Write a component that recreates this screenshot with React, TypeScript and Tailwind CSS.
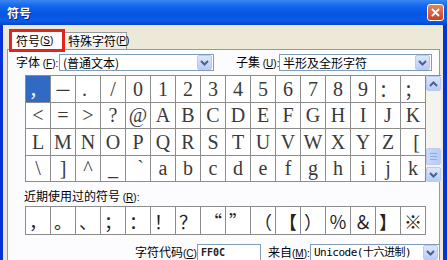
import React from "react";

type Cell = { c: string; cjk?: boolean; cls?: string };

const rows: Cell[][] = [
  [
    { c: "，", cjk: true },
    { c: "－", cjk: true },
    { c: ".", cls: "justify-start pl-[6px]" },
    { c: "/" },
    { c: "0" },
    { c: "1" },
    { c: "2" },
    { c: "3" },
    { c: "4" },
    { c: "5" },
    { c: "6" },
    { c: "7" },
    { c: "8" },
    { c: "9" },
    { c: "：", cjk: true },
    { c: "；", cjk: true },
  ],
  "<=>?@ABCDEFGHIJK".split("").map((c) => ({ c })),
  [
    ..."LMNOPQRSTUVWXYZ".split("").map((c) => ({ c })),
    { c: "[", cls: "justify-end pr-[5px]" },
  ],
  [
    { c: "\\" },
    { c: "]" },
    { c: "^" },
    { c: "_" },
    { c: "`", cls: "justify-end pr-[6px]" },
    ..."abcdefghijk".split("").map((c) => ({ c })),
  ],
];

const recent = ["，", "。", "、", "；", "：", "！", "？", "“", "”", "（", "【", "）", "％", "＆", "】", "※"];

function Chevron({ up }: { up?: boolean }) {
  return (
    <svg width="9" height="6" viewBox="0 0 9 6">
      <path
        d={up ? "M1 5 L4.5 1.5 L8 5" : "M1 1 L4.5 4.5 L8 1"}
        fill="none"
        stroke="#4D6185"
        strokeWidth="2"
      />
    </svg>
  );
}

function ArrowBtn({ up }: { up?: boolean }) {
  return (
    <div className="flex h-[15px] w-[15px] shrink-0 items-center justify-center rounded-[2px] border border-[#B9CBF3] bg-gradient-to-b from-[#DCE6FD] to-[#B9CCF7]">
      <Chevron up={up} />
    </div>
  );
}

function Combo({ w, children, small }: { w: string; children: React.ReactNode; small?: boolean }) {
  return (
    <div className={`flex h-[17px] ${w} shrink-0 items-center border border-[#7F9DB9] bg-white pr-[1px]`}>
      <div
        className={`flex-1 overflow-hidden whitespace-nowrap pl-[3px] ${
          small ? "text-[11px] font-['DejaVu_Sans_Mono','Noto_Sans_CJK_SC',monospace] tracking-[-0.5px]" : "text-[12px]"
        } leading-[15px] text-black`}
      >
        {children}
      </div>
      <ArrowBtn />
    </div>
  );
}

function U({ ch, colon }: { ch: string; colon?: boolean }) {
  return (
    <span className="font-['Liberation_Sans',sans-serif] text-[10px]">
      (<span className="underline">{ch}</span>){colon ? ":" : ""}
    </span>
  );
}

export default function App() {
  return (
    <div className="flex h-[260px] w-[447px] flex-col overflow-hidden bg-gradient-to-r from-[#0831D9] via-[#0A5CE8] to-[#0831D9] font-['Noto_Sans_CJK_SC','Liberation_Sans',sans-serif]">
      {/* Title bar */}
      <div className="flex h-[25px] shrink-0 items-center bg-[linear-gradient(to_bottom,#3A86F4_0%,#1265EC_25%,#0656E2_55%,#0A5BE8_85%,#0344CC_100%)] pl-[7px] pr-[3px]">
        <span className="text-[12px] font-bold leading-none text-white [text-shadow:1px_1px_0_#0A1E8C]">符号</span>
        <div className="ml-auto flex h-[17px] w-[17px] items-center justify-center rounded-[3px] border border-white bg-gradient-to-b from-[#E9805F] to-[#C8401F]">
          <svg width="9" height="9" viewBox="0 0 9 9">
            <path d="M1 1 L8 8 M8 1 L1 8" stroke="white" strokeWidth="1.8" />
          </svg>
        </div>
      </div>

      {/* Body */}
      <div className="ml-[3px] mr-[4px] flex flex-1 flex-col bg-[#ECE9D8]">
        {/* Tabs */}
        <div className="relative z-10 ml-[6px] mt-[4px] flex h-[23px] items-start">
          <div className="flex h-[23px] w-[56px] items-center whitespace-nowrap border-[3px] border-[#E3231E] bg-[#FCFCFE] pl-[4px] text-[12px] leading-none text-black">
            符号<U ch="S" />
          </div>
          <div className="mt-[3px] flex h-[17px] w-[62px] items-center whitespace-nowrap border-r border-t border-[#919B9C] bg-gradient-to-b from-white to-[#ECEBE6] pl-[3px] text-[12px] leading-none text-black">
            特殊字符<U ch="P" />
          </div>
        </div>

        {/* Panel */}
        <div className="ml-[4px] mr-[3px] -mt-[3px] flex flex-1 flex-col border border-[#919B9C] bg-[#FCFCFE] pl-[8px]">
          {/* Row 1 */}
          <div className="mt-[4px] flex items-center text-[12px] leading-none text-black">
            <span className="w-[43px] shrink-0 whitespace-nowrap">
              字体 <U ch="F" colon />
            </span>
            <Combo w="w-[155px]">(普通文本)</Combo>
            <span className="ml-[22px] w-[43px] shrink-0 whitespace-nowrap">
              子集 <U ch="U" colon />
            </span>
            <Combo w="w-[153px]">半形及全形字符</Combo>
          </div>

          {/* Grid */}
          <div className="ml-[9px] mt-[4px] flex">
            <div className="grid grid-cols-[repeat(16,25px)] grid-rows-[repeat(4,26.5px)] border-l border-t border-[#8C8C8C] bg-white">
              {rows.flatMap((row, ri) =>
                row.map((cell, ci) => {
                  const sel = ri === 0 && ci === 0;
                  return (
                    <div
                      key={`${ri}-${ci}`}
                      className={`flex items-center justify-center border-b border-r border-[#8C8C8C] leading-none ${
                        sel ? "bg-[#316AC5] text-white" : "text-[#3A3A3A]"
                      } ${
                        cell.cjk
                          ? "font-['Noto_Sans_CJK_SC',sans-serif] text-[18px]"
                          : "font-['Liberation_Serif',serif] text-[20px]"
                      } ${cell.cls ?? ""}`}
                    >
                      {cell.c}
                    </div>
                  );
                })
              )}
            </div>
            {/* Scrollbar */}
            <div className="flex h-[107px] w-[15px] flex-col border-t border-[#8C8C8C] bg-[#F4F3EE]">
              <ArrowBtn up />
              <div className="flex-1" />
              <div className="flex h-[17px] w-[15px] flex-col items-center justify-center gap-[2px] rounded-[2px] border border-[#B9CBF3] bg-gradient-to-r from-[#CAD8FA] to-[#B7CBF7]">
                <div className="h-[1px] w-[7px] bg-[#8DA8E8]" />
                <div className="h-[1px] w-[7px] bg-[#8DA8E8]" />
                <div className="h-[1px] w-[7px] bg-[#8DA8E8]" />
              </div>
              <div className="h-[2px]" />
              <ArrowBtn />
            </div>
          </div>

          {/* Recent label */}
          <div className="mt-[7px] h-[14px] pl-[8px] text-[12px] leading-[14px] text-black">
            近期使用过的符号 <U ch="R" colon />
          </div>

          {/* Recent row */}
          <div className="ml-[9px] mt-[3px] grid w-[401px] grid-cols-[repeat(16,25px)] border-l border-t border-[#8C8C8C] bg-white">
            {recent.map((c, i) => (
              <div
                key={i}
                className="flex h-[28px] items-center justify-center border-b border-r border-[#8C8C8C] font-['Noto_Sans_CJK_SC',sans-serif] text-[18px] leading-none text-[#222]"
              >
                {c}
              </div>
            ))}
          </div>

          {/* Bottom row */}
          <div className="mt-[9px] flex items-center text-[12px] leading-none text-black">
            <span className="ml-[119px] w-[62px] shrink-0 whitespace-nowrap">
              字符代码<U ch="C" colon />
            </span>
            <div className="flex h-[17px] w-[64px] shrink-0 items-center border border-[#7F9DB9] bg-white pl-[3px] font-['DejaVu_Sans_Mono',monospace] text-[10px] font-bold text-[#222]">
              FF0C
            </div>
            <span className="ml-[7px] w-[42px] shrink-0 whitespace-nowrap">
              来自<U ch="M" colon />
            </span>
            <Combo w="w-[130px]" small>
              Unicode(十六进制)
            </Combo>
          </div>
        </div>
      </div>
    </div>
  );
}
